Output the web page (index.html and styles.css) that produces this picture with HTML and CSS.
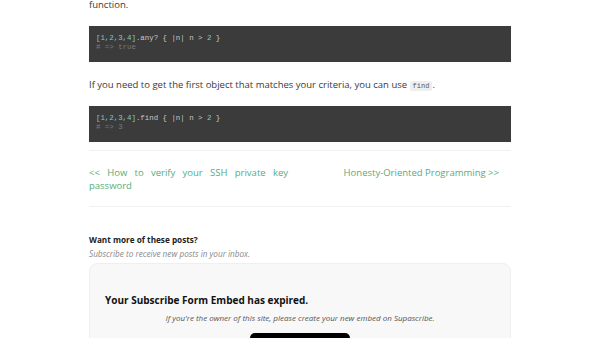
FILE: index.html
```html
<!DOCTYPE html>
<html>
<head>
<meta charset="utf-8">
<link rel="stylesheet" href="styles.css">
</head>
<body>
<main class="post">
  <p class="text first">function.</p>
  <pre class="code"><span class="num">[1,2,3,4]</span>.any? { |n| n &gt; <span class="num">2</span> }
<span class="cm"># =&gt; true</span></pre>
  <p class="text">If you need to get the first object that matches your criteria, you can use <code class="inline">find</code>.</p>
  <pre class="code"><span class="num">[1,2,3,4]</span>.find { |n| n &gt; <span class="num">2</span> }
<span class="cm"># =&gt; 3</span></pre>
  <hr class="sep">
  <nav class="pager">
    <div class="pager-col left"><a href="#">&lt;&lt; How to verify your SSH private key password</a></div>
    <div class="pager-col right"><a href="#">Honesty-Oriented Programming &gt;&gt;</a></div>
  </nav>
  <hr class="sep flush">
  <section class="subscribe">
    <h3 class="sub-title">Want more of these posts?</h3>
    <p class="sub-desc">Subscribe to receive new posts in your inbox.</p>
    <div class="embed">
      <h2 class="embed-title">Your Subscribe Form Embed has expired.</h2>
      <p class="embed-note">If you're the owner of this site, please create your new embed on Supascribe.</p>
      <div class="embed-btn-row"><span class="embed-btn"></span></div>
    </div>
  </section>
</main>
</body>
</html>
```
FILE: styles.css
```css
html, body {
  margin: 0;
  padding: 0;
  background: #ffffff;
}
body {
  font-family: "Open Sans", "Noto Sans", sans-serif;
  color: #333333;
  overflow: hidden;
}
.post {
  width: 422px;
  margin: 0 auto;
}
.text {
  font-size: 9.5px;
  line-height: 15px;
  margin: 14.5px 0;
  color: #3a3a3a;
}
.text.first {
  margin-top: -3.5px;
}
.code {
  background: #3b3b3b;
  color: #c8c8c8;
  font-family: "Liberation Mono", "DejaVu Sans Mono", monospace;
  font-size: 7.4px;
  line-height: 9px;
  padding: 8px 7px 10px;
  margin: 0;
}
.num { color: #86c9c0; }
.cm { color: #7a7a7a; }
.inline {
  font-family: "Liberation Mono", "DejaVu Sans Mono", monospace;
  font-size: 7px;
  line-height: 1;
  background: #eeeeee;
  color: #555555;
  padding: 1px 3px;
  border-radius: 2px;
}
.sep {
  border: 0;
  border-top: 1px solid #f1f1f1;
  margin: 8px 0 0;
}
.sep.flush {
  margin-top: 0;
}
.pager {
  display: flex;
  padding: 15px 0 14px;
  font-size: 9.5px;
  line-height: 13px;
}
.pager-col {
  flex: 1;
  padding-right: 12px;
}
.pager-col.left { text-align: justify; }
.pager-col.right { text-align: right; }
.pager a {
  color: #55ad7e;
  text-decoration: none;
}
.subscribe {
  padding-top: 26px;
}
.sub-title {
  font-size: 8.2px;
  font-weight: 700;
  color: #222222;
  margin: 0;
  line-height: 13px;
}
.sub-desc {
  font-size: 8.2px;
  font-style: italic;
  color: #8a8a8a;
  margin: 1px 0 3px;
  line-height: 13px;
}
.embed {
  background: #f8f8f8;
  border: 1px solid #efefef;
  border-radius: 8px;
  padding: 28px 15px 0;
  height: 100px;
}
.embed-title {
  font-size: 10px;
  font-weight: 700;
  color: #111111;
  margin: 0;
  line-height: 16px;
}
.embed-note {
  font-size: 8px;
  font-style: italic;
  color: #555555;
  text-align: center;
  margin: 4px 0 0;
  line-height: 12px;
}
.embed-btn-row {
  display: flex;
  justify-content: center;
  margin-top: 9px;
}
.embed-btn {
  display: block;
  width: 100px;
  height: 24px;
  background: #000000;
  border-radius: 5px;
}
```
